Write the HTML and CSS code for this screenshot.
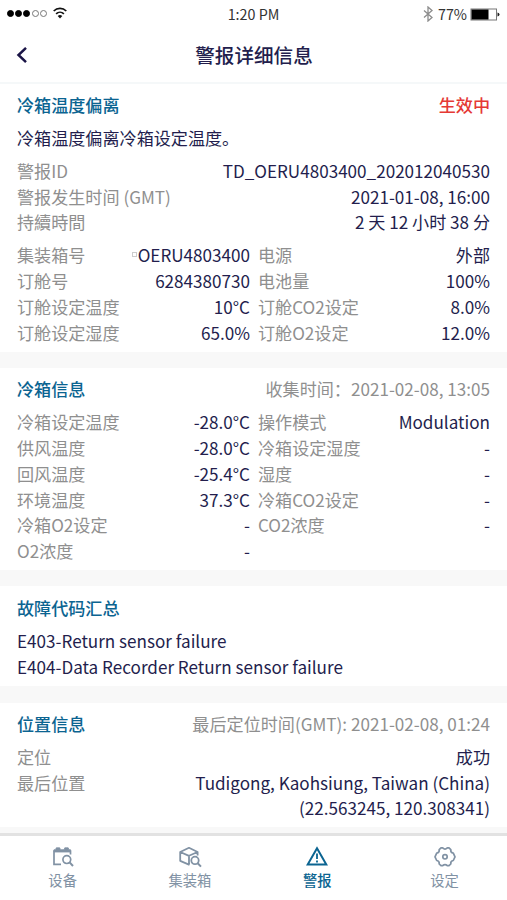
FILE: index.html
```
<!DOCTYPE html>
<html lang="zh-CN">
<head>
  <meta charset="UTF-8">
  <meta name="viewport" content="width=device-width, initial-scale=1.0">
  <title>警报详细信息</title>
  <link rel="stylesheet" href="styles.css">
</head>
<body>
  <div class="status-bar">
    <div class="signal">
      <i class="dot on"></i><i class="dot on"></i><i class="dot on"></i><i class="dot"></i><i class="dot"></i>
      <svg class="wifi" width="14" height="12" viewBox="0 0 14 12" fill="none" stroke="#111" stroke-width="1.7">
        <path d="M.7 4C4.300.6 9.700.6 13.300 4M3.100 6.800C5.300 4.700 8.700 4.700 10.900 6.800"/>
        <path d="M4.700 9Q7 7 9.300 9L7 11.400Z" fill="#111" stroke="none"/>
      </svg>
    </div>
    <div class="time">1:20 PM</div>
    <div class="power">
      <svg class="bluetooth" width="10" height="16" viewBox="0 0 10 16" fill="none" stroke="#8c8c8c" stroke-width="1.3">
        <path d="M1 4.500L9 11.500L5 15V1L9 4.500L1 11.500"/>
      </svg>
      <span>77%</span>
      <svg class="battery" width="30" height="13" viewBox="0 0 30 13">
        <rect x="1" y="1" width="25.500" height="11" fill="#fff" stroke="#777"/>
        <rect x="1.500" y="1.500" width="17" height="10" fill="#000"/>
        <path d="M27.500 4.500Q29.500 5 29.500 6.500T27.500 8.500Z" fill="#222"/>
      </svg>
    </div>
  </div>

  <div class="header">
    <a href="#" class="back" title="返回">
      <svg width="12" height="18" viewBox="0 0 12 18" fill="none" stroke="#1a1446" stroke-width="2.500">
        <path d="M10 1.800L2.500 9L10 16.200"/>
      </svg>
    </a>
    <h1>警报详细信息</h1>
  </div>

  <div class="content">
    <div class="section">
      <div class="row"><h2>冷箱温度偏离</h2><span class="active-state">生效中</span></div>
      <p class="desc">冷箱温度偏离冷箱设定温度。</p>
      <div class="group">
        <div class="row"><span>警报ID</span><b>TD_OERU4803400_202012040530</b></div>
        <div class="row"><span>警报发生时间 (GMT)</span><b>2021-01-08, 16:00</b></div>
        <div class="row"><span>持續時間</span><b>2 天 12 小时 38 分</b></div>
      </div>
      <div class="grid">
        <div class="row"><span>集装箱号</span><b class="marked">OERU4803400</b></div>
        <div class="row"><span>电源</span><b>外部</b></div>
        <div class="row"><span>订舱号</span><b>6284380730</b></div>
        <div class="row"><span>电池量</span><b>100%</b></div>
        <div class="row"><span>订舱设定温度</span><b>10°C</b></div>
        <div class="row"><span>订舱CO2设定</span><b>8.0%</b></div>
        <div class="row"><span>订舱设定湿度</span><b>65.0%</b></div>
        <div class="row"><span>订舱O2设定</span><b>12.0%</b></div>
      </div>
    </div>

    <div class="section">
      <div class="row"><h2>冷箱信息</h2><span>收集时间：2021-02-08, 13:05</span></div>
      <div class="grid">
        <div class="row"><span>冷箱设定温度</span><b>-28.0°C</b></div>
        <div class="row"><span>操作模式</span><b>Modulation</b></div>
        <div class="row"><span>供风温度</span><b>-28.0°C</b></div>
        <div class="row"><span>冷箱设定湿度</span><b>-</b></div>
        <div class="row"><span>回风温度</span><b>-25.4°C</b></div>
        <div class="row"><span>湿度</span><b>-</b></div>
        <div class="row"><span>环境温度</span><b>37.3°C</b></div>
        <div class="row"><span>冷箱CO2设定</span><b>-</b></div>
        <div class="row"><span>冷箱O2设定</span><b>-</b></div>
        <div class="row"><span>CO2浓度</span><b>-</b></div>
        <div class="row"><span>O2浓度</span><b>-</b></div>
      </div>
    </div>

    <div class="section">
      <div class="row"><h2>故障代码汇总</h2></div>
      <div class="group">
        <p>E403-Return sensor failure</p>
        <p>E404-Data Recorder Return sensor failure</p>
      </div>
    </div>

    <div class="section location">
      <div class="row"><h2>位置信息</h2><span>最后定位时间(GMT): 2021-02-08, 01:24</span></div>
      <div class="group">
        <div class="row"><span>定位</span><b>成功</b></div>
        <div class="row"><span>最后位置</span><b>Tudigong, Kaohsiung, Taiwan (China)<br>(22.563245, 120.308341)</b></div>
      </div>
    </div>
  </div>

  <div class="tabs">
    <a href="#" class="tab">
      <svg width="22" height="22" viewBox="0 0 22 22" fill="none" stroke="currentColor" stroke-width="1.700">
        <path d="M9 18.400H2V5H18.500V8.500"/>
        <path d="M2 6V3.700H3.500L4.300 1.800H7.700L8.500 3.700H12L12.800 1.800H16.200L17 3.700H18.500V6Z" fill="currentColor" stroke-width=".8"/>
        <circle cx="14.800" cy="13.600" r="3.900"/>
        <path d="M17.600 16.400L21 20" stroke-width="2"/>
      </svg>
      <span>设备</span>
    </a>
    <a href="#" class="tab">
      <svg width="24" height="22" viewBox="0 0 24 22" fill="none" stroke="currentColor" stroke-width="1.800" stroke-linejoin="round">
        <path d="M11.500 18.800L2.200 14.800V6L11 1.800L19.600 6V9.500M2.200 6L11 9.800L19.600 6M11 9.800V18.500"/>
        <circle cx="17" cy="14.400" r="3.700"/>
        <path d="M19.700 17.200L23 20.600" stroke-width="2"/>
      </svg>
      <span>集装箱</span>
    </a>
    <a href="#" class="tab current">
      <svg width="22" height="22" viewBox="0 0 22 22" fill="none" stroke="currentColor" stroke-width="2">
        <path d="M11 2.200L20.300 18.600H1.700Z"/>
        <path d="M11 7.500V13M11 14.500V16.500" stroke-width="1.800"/>
      </svg>
      <span>警报</span>
    </a>
    <a href="#" class="tab">
      <svg width="22" height="22" viewBox="0 0 22 22" fill="none" stroke="currentColor" stroke-width="1.700" stroke-linejoin="round">
        <path d="M7 1.900L8.700 1.900Q11 4.200 13.300 1.900L15 1.900L16.800 3.600Q16.300 6.600 19.300 7.100L21 10.800L19.300 14.500Q16.300 15 16.800 18L15 19.700L13.300 19.700Q11 17.400 8.700 19.700L7 19.700L5.200 18Q5.700 15 2.700 14.500L1 10.800L2.700 7.100Q5.700 6.600 5.200 3.600Z"/>
        <circle cx="11" cy="10.800" r="2.200"/>
      </svg>
      <span>设定</span>
    </a>
  </div>
</body>
</html>
```
FILE: styles.css
```
* {
  box-sizing: border-box;
}

body {
  margin: 0;
  height: 900px;
  overflow: hidden;
  display: flex;
  flex-direction: column;
  font-family: "Noto Sans CJK SC", sans-serif;
  font-size: 17.1px;
  line-height: 25.7px;
  color: #231e4d;
  background: #fff;
}

h1, h2, p {
  margin: 0;
}

a {
  color: inherit;
  text-decoration: none;
}

svg {
  display: block;
}

.status-bar {
  height: 28px;
  padding: 0 7px;
  display: grid;
  grid-template-columns: 1fr auto 1fr;
  align-items: center;
  font-size: 14.3px;
  line-height: 28px;
  color: #333;
}

.signal {
  display: flex;
  align-items: center;
  gap: 1.2px;
  padding-bottom: 2px;
}

.dot {
  width: 7px;
  height: 7px;
  border: 1px solid #777;
  border-radius: 50%;
}

.dot.on {
  background: #000;
  border-color: #000;
}

.wifi {
  margin-left: 5px;
}

.power {
  display: flex;
  justify-content: flex-end;
  align-items: center;
}

.bluetooth {
  margin-right: 5px;
}

.battery {
  margin-left: 3px;
}

.header {
  height: 55.5px;
  padding: 0 16px;
  display: grid;
  grid-template-columns: 1fr auto 1fr;
  align-items: center;
  border-bottom: 2px solid #f5f8f9;
}

.header h1 {
  padding-left: 1px;
  font-size: 19.6px;
  font-weight: 500;
  line-height: 30px;
}

.content {
  flex: 1;
  display: flex;
  flex-direction: column;
  gap: 16.3px;
  background: #f8f8f8;
}

.section {
  padding: 8.5px 17px 6.4px;
  background: #fff;
}

.location {
  margin-top: 1px;
  padding-top: 8px;
}

.row {
  display: flex;
  justify-content: space-between;
  white-space: nowrap;
}

.row span {
  color: #8f8f8f;
}

.row b {
  font-weight: 400;
  text-align: right;
}

.row h2 {
  font-size: 17.1px;
  font-weight: 500;
  color: #0b6491;
}

.row .active-state {
  font-weight: 500;
  color: #e53935;
}

.desc, .group, .grid {
  margin-top: 7.3px;
}

.grid {
  display: grid;
  grid-template-columns: 233px 232px;
  column-gap: 8px;
}

.marked::before {
  content: "";
  display: inline-block;
  width: 3px;
  height: 3px;
  margin-right: 1px;
  border: 1px solid #ccc;
  vertical-align: 5px;
}

.tabs {
  height: 67px;
  display: grid;
  grid-template-columns: repeat(4, 127.3px);
  margin-left: -1px;
  border-top: 3px solid #e2e2e2;
  background: #fff;
}

.tab {
  display: flex;
  flex-direction: column;
  align-items: center;
  padding-top: 10px;
  font-size: 14.3px;
  line-height: 24px;
  color: #8192a4;
}

.tab.current {
  color: #0b6491;
  font-weight: 500;
}
```
